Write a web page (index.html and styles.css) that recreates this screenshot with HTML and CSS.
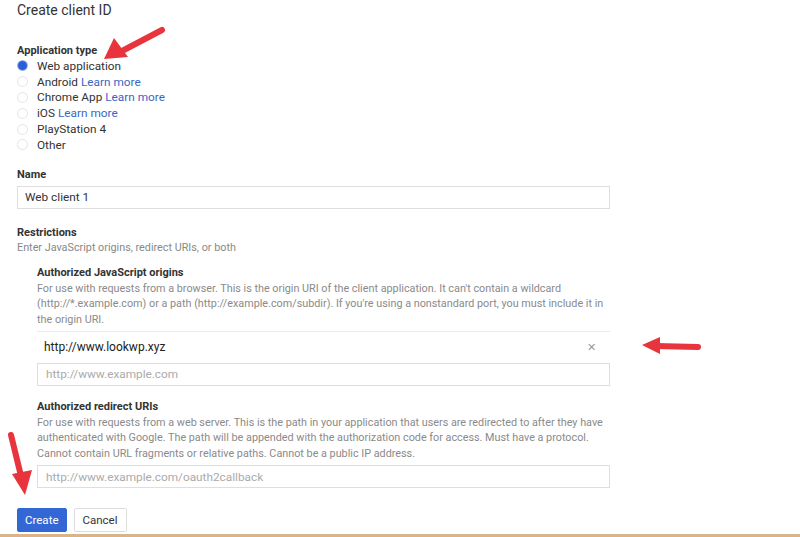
FILE: index.html
```html
<!DOCTYPE html>
<html lang="en">
  <head>
    <meta charset="UTF-8" />
    <meta name="viewport" content="width=device-width, initial-scale=1.0" />
    <title>Create client ID</title>
    <link rel="stylesheet" href="styles.css">
  </head>
  <body>
    <div class="page">
      <h1 class="title">Create client ID</h1>

      <div class="field">
        <div class="label">Application type</div>
        <div class="radios">
          <label class="radio"><span class="dot checked"></span>Web application</label>
          <label class="radio"><span class="dot"></span>Android <a href="#">Learn more</a></label>
          <label class="radio"><span class="dot"></span>Chrome App <a href="#">Learn more</a></label>
          <label class="radio"><span class="dot"></span>iOS <a href="#">Learn more</a></label>
          <label class="radio"><span class="dot"></span>PlayStation 4</label>
          <label class="radio"><span class="dot"></span>Other</label>
        </div>
      </div>

      <div class="field name-field">
        <div class="label">Name</div>
        <div class="input">Web client 1</div>
      </div>

      <div class="field restrictions">
        <div class="label">Restrictions</div>
        <div class="hint">Enter JavaScript origins, redirect URIs, or both</div>

        <div class="sub">
          <div class="label">Authorized JavaScript origins</div>
          <p class="desc">For use with requests from a browser. This is the origin URI of the client application. It can't contain a wildcard (http://*.example.com) or a path (http://example.com/subdir). If you're using a nonstandard port, you must include it in the origin URI.</p>
          <div class="entry">
            <span>http://www.lookwp.xyz</span>
            <span class="remove">&#x2715;</span>
          </div>
          <div class="input placeholder">http://www.example.com</div>
        </div>

        <div class="sub redirect">
          <div class="label">Authorized redirect URIs</div>
          <p class="desc">For use with requests from a web server. This is the path in your application that users are redirected to after they have authenticated with Google. The path will be appended with the authorization code for access. Must have a protocol. Cannot contain URL fragments or relative paths. Cannot be a public IP address.</p>
          <div class="input placeholder">http://www.example.com/oauth2callback</div>
        </div>
      </div>

      <div class="actions">
        <button class="btn primary">Create</button>
        <button class="btn">Cancel</button>
      </div>
    </div>

    <div class="bottom-line"></div>

    <!-- annotation arrows -->
    <svg class="arrow arrow-top" width="70" height="40" viewBox="0 0 70 40">
      <line x1="62" y1="6" x2="22" y2="27" stroke="#e8343c" stroke-width="6" stroke-linecap="round" />
      <polygon points="4,35 14,14 28,33" fill="#e8343c" />
    </svg>
    <svg class="arrow arrow-right" width="66" height="20" viewBox="0 0 66 20">
      <line x1="58" y1="11" x2="16" y2="10" stroke="#e8343c" stroke-width="6" stroke-linecap="round" />
      <polygon points="2,9 20,1 20,18" fill="#e8343c" />
    </svg>
    <svg class="arrow arrow-down" width="30" height="68" viewBox="0 0 30 68">
      <line x1="5" y1="5" x2="15" y2="46" stroke="#e8343c" stroke-width="6" stroke-linecap="round" />
      <polygon points="6,44 26,40 19,65" fill="#e8343c" />
    </svg>
  </body>
</html>
```

FILE: styles.css
```css
body {
  margin: 0;
  font-family: Roboto, "Liberation Sans", Arial, sans-serif;
  background-color: #fff;
  color: #212121;
  height: 537px;
  overflow: hidden;
}

.page {
  padding: 1px 0 0 17px;
  width: 593px;
}

.title {
  margin: 0;
  font-size: 14px;
  font-weight: 400;
  line-height: 18px;
  color: #333;
}

.field {
  margin-top: 25px;
}

.label {
  font-size: 11px;
  font-weight: 700;
  line-height: 14px;
  color: #333;
}

.radios {
  display: flex;
  flex-direction: column;
}

.radio {
  display: flex;
  align-items: center;
  height: 15.8px;
  font-size: 11.8px;
  color: #333;
}

.radio a {
  color: #3a66c4;
  text-decoration: none;
  margin-left: 3px;
}

.dot {
  width: 11px;
  height: 11px;
  border: 1px solid #e4e4e4;
  border-radius: 50%;
  margin-right: 9px;
  box-sizing: border-box;
}

.dot.checked {
  border: none;
  background: radial-gradient(circle, #2a5fd6 50%, #c9d6f2 72%, #fff 100%);
}

.name-field {
  margin-top: 15px;
}

.name-field .input {
  margin-top: 4px;
}

.input {
  height: 23px;
  border: 1px solid #dedede;
  box-sizing: border-box;
  display: flex;
  align-items: center;
  padding-left: 7px;
  font-size: 11.8px;
  color: #333;
}

.input.placeholder {
  color: #aaa;
  padding-left: 8px;
}

.restrictions {
  margin-top: 17px;
}

.hint {
  font-size: 10.8px;
  line-height: 16px;
  color: #888;
}

.sub {
  margin: 10px 0 0 20px;
}

.desc {
  margin: 1px 0 0;
  font-size: 10.8px;
  line-height: 15.6px;
  color: #8a8a8a;
}

.entry {
  margin-top: 3px;
  border-top: 1px solid #ececec;
  height: 31px;
  display: flex;
  align-items: center;
  justify-content: space-between;
  padding: 0 14px 0 7px;
  font-size: 12px;
  color: #222;
}

.remove {
  color: #999;
  font-size: 11px;
}

.redirect {
  margin-top: 14px;
}

.redirect .input {
  margin-top: 4px;
}

.actions {
  margin-top: 20px;
  display: flex;
  gap: 7px;
}

.btn {
  height: 24px;
  padding: 0 8px;
  font-family: Roboto, "Liberation Sans", Arial, sans-serif;
  font-size: 11.5px;
  border: 1px solid #ddd;
  border-radius: 2px;
  background-color: #fff;
  color: #333;
}

.btn.primary {
  background-color: #3367d6;
  border-color: #3367d6;
  color: #fff;
  padding: 0 7px;
}

.bottom-line {
  position: absolute;
  left: 0;
  right: 0;
  top: 534px;
  height: 3px;
  background-color: #d8b488;
}

.arrow {
  position: absolute;
}

.arrow-top {
  left: 100px;
  top: 24px;
}

.arrow-right {
  left: 640px;
  top: 336px;
}

.arrow-down {
  left: 6px;
  top: 430px;
}
```
